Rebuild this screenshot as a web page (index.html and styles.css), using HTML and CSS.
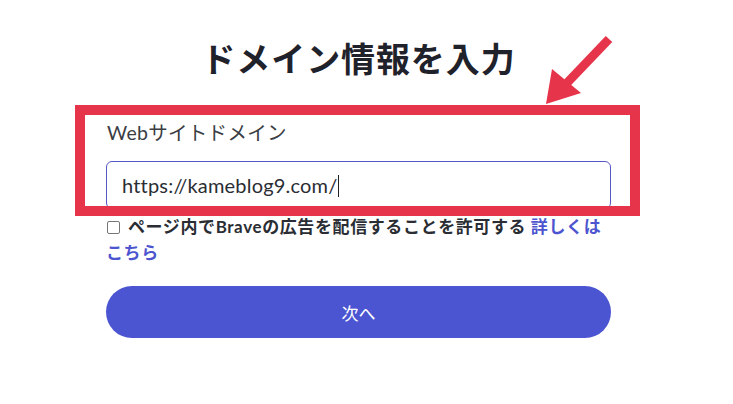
FILE: index.html
```html
<!DOCTYPE html>
<html lang="ja">
<head>
<meta charset="utf-8">
<title>ドメイン情報を入力</title>
<link rel="stylesheet" href="styles.css">
</head>
<body>
<div class="page">
  <h1 class="title">ドメイン情報を入力</h1>

  <div class="field">
    <label class="field-label" for="domain">Webサイトドメイン</label>
    <div class="field-input" id="domain">https://kameblog9.com/<span class="caret"></span></div>
    <span class="mark-box"></span>
  </div>

  <p class="consent"><span class="check"></span>ページ内でBraveの広告を配信することを許可する <a href="#">詳しくはこちら</a></p>

  <button class="btn-next">次へ</button>

  <svg class="mark-arrow" width="80" height="80" viewBox="0 0 80 80">
    <line x1="69" y1="9" x2="26" y2="54" stroke="#e6344a" stroke-width="9" />
    <polygon points="6,74 12,39 41,63" fill="#e6344a" />
  </svg>
</div>
</body>
</html>
```

FILE: styles.css
```css
*{ margin:0; padding:0; box-sizing:border-box;}
body{ background:#fff; font-family:"Lato","Noto Sans CJK JP",sans-serif; color:#2a2d33; padding-right:16px;}
.page{ width:505px; margin:0 auto; position:relative; padding-top:36px; display:flex; flex-direction:column;}

.title{ font-family:"Noto Sans CJK JP",sans-serif; font-size:34px; font-weight:700; line-height:44px; text-align:center; color:#1f222b; letter-spacing:0.9px;}

.field{ position:relative; margin-top:36px; display:flex; flex-direction:column;}
.field-label{ font-size:19.5px; line-height:26px; padding-top:4px; color:#3a3d44; padding-left:1px; font-weight:400; letter-spacing:0.3px;}
.field-input{ margin-top:15px; height:48px; border:1px solid #5558c4; border-radius:6px; padding:0 15px; font-size:20px; line-height:46px; color:#2a2d33; letter-spacing:0.2px;}
.caret{ display:inline-block; width:1px; height:22px; background:#222; vertical-align:middle; margin-left:1px; position:relative; top:-2px;}

/* annotation overlay */
.mark-box{ position:absolute; left:-31px; right:-29px; top:-11px; bottom:-7px; border:10px solid #e6344a; pointer-events:none;}
.mark-arrow{ position:absolute; left:434px; top:30px;}

.consent{ margin-top:5px; font-size:17px; font-weight:700; line-height:26px; color:#2a2d33; letter-spacing:0.6px;}
.check{ display:inline-block; width:13px; height:13px; border:1px solid #767676; border-radius:2px; background:#fff; margin:0 8px 0 1px; vertical-align:-1px;}
.consent a{ color:#4c54cf; text-decoration:none;}

.btn-next{ margin-top:20px; height:52px; border:0; border-radius:26px; background:#4c55d1; color:#fff; font-family:"Lato","Noto Sans CJK JP",sans-serif; font-size:17px; font-weight:400;}
```
